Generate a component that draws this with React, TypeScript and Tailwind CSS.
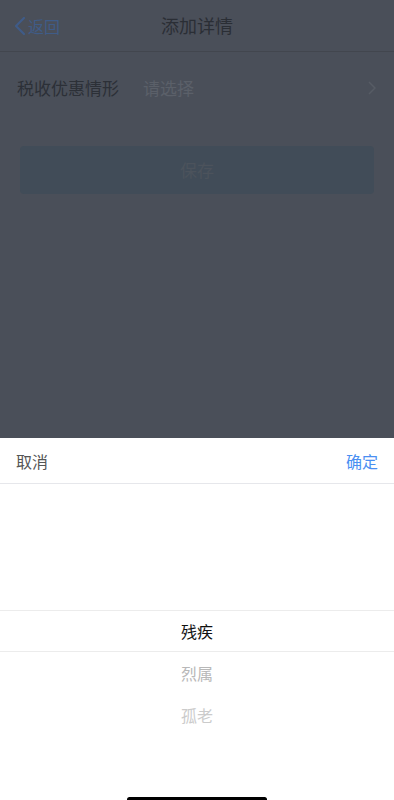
import React from "react";

const font = { fontFamily: '"Noto Sans CJK SC", "Noto Sans", sans-serif' };

export default function App() {
  return (
    <div className="relative w-[394px] h-[800px] overflow-hidden bg-[#4a4f59] flex flex-col" style={font}>
      {/* dimmed page */}
      <div className="h-[52px] flex items-center relative border-b border-[#42464e]">
        <div className="flex items-center pl-[14px] text-[#3f5c88] text-[16px]">
          <svg width="12" height="20" viewBox="0 0 12 20" className="mr-[2px]">
            <path d="M10 2 L2 10 L10 18" fill="none" stroke="#3f5c88" strokeWidth="2.2" strokeLinecap="round" strokeLinejoin="round" />
          </svg>
          <span>返回</span>
        </div>
        <div className="absolute left-0 right-0 text-center text-[18px] text-[#2a2e35] pointer-events-none">添加详情</div>
      </div>
      <div className="h-[72px] flex items-center pl-[17px] pr-[18px]">
        <span className="text-[17px] text-[#2c3037] w-[126px]">税收优惠情形</span>
        <span className="text-[17px] text-[#5b6069] flex-1">请选择</span>
        <svg width="8" height="14" viewBox="0 0 8 14">
          <path d="M1 1 L7 7 L1 13" fill="none" stroke="#575c65" strokeWidth="1.5" />
        </svg>
      </div>
      <div className="px-[20px] pt-[22px]">
        <div className="h-[48px] rounded-[4px] bg-[#414c58] flex items-center justify-center text-[17px] text-[#4c535c]">保存</div>
      </div>
      <div className="flex-1" />
      {/* sheet */}
      <div className="h-[362px] bg-white flex flex-col">
        <div className="h-[46px] flex items-center justify-between px-[16px] border-b border-[#e6e7eb] text-[16px]">
          <span className="text-[#555]">取消</span>
          <span className="text-[#4a8ff2]">确定</span>
        </div>
        <div className="h-[126px]" />
        <div className="h-[42px] border-y border-[#ececec] flex items-center justify-center text-[16px] text-[#111]">残疾</div>
        <div className="h-[42px] flex items-center justify-center text-[16px] text-[#b8b8b8]">烈属</div>
        <div className="h-[42px] flex items-center justify-center text-[16px] text-[#cbcbcb]">孤老</div>
        <div className="flex-1 flex items-end justify-center">
          <div className="w-[140px] h-[5px] rounded-full bg-black mb-[-2px]" />
        </div>
      </div>
    </div>
  );
}
